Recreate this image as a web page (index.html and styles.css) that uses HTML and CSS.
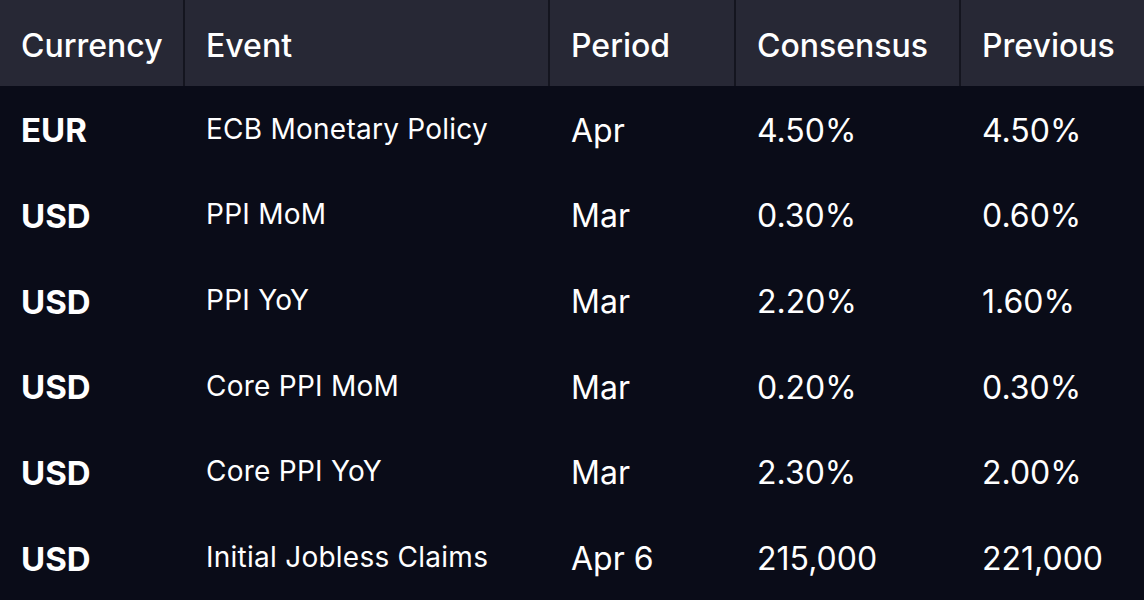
FILE: index.html
```html
<!DOCTYPE html>
<html>
<head>
<meta charset="utf-8">
<link rel="stylesheet" href="styles.css">
</head>
<body>
<div class="table">
  <div class="row head">
    <div class="cell">Currency</div>
    <div class="cell">Event</div>
    <div class="cell">Period</div>
    <div class="cell">Consensus</div>
    <div class="cell">Previous</div>
  </div>
  <div class="row">
    <div class="cell cur">EUR</div>
    <div class="cell ev">ECB Monetary Policy</div>
    <div class="cell">Apr</div>
    <div class="cell">4.50%</div>
    <div class="cell">4.50%</div>
  </div>
  <div class="row">
    <div class="cell cur">USD</div>
    <div class="cell ev">PPI MoM</div>
    <div class="cell">Mar</div>
    <div class="cell">0.30%</div>
    <div class="cell">0.60%</div>
  </div>
  <div class="row">
    <div class="cell cur">USD</div>
    <div class="cell ev">PPI YoY</div>
    <div class="cell">Mar</div>
    <div class="cell">2.20%</div>
    <div class="cell">1.60%</div>
  </div>
  <div class="row">
    <div class="cell cur">USD</div>
    <div class="cell ev">Core PPI MoM</div>
    <div class="cell">Mar</div>
    <div class="cell">0.20%</div>
    <div class="cell">0.30%</div>
  </div>
  <div class="row">
    <div class="cell cur">USD</div>
    <div class="cell ev">Core PPI YoY</div>
    <div class="cell">Mar</div>
    <div class="cell">2.30%</div>
    <div class="cell">2.00%</div>
  </div>
  <div class="row">
    <div class="cell cur">USD</div>
    <div class="cell ev">Initial Jobless Claims</div>
    <div class="cell">Apr 6</div>
    <div class="cell">215,000</div>
    <div class="cell">221,000</div>
  </div>
</div>
</body>
</html>
```
FILE: styles.css
```css
html, body {
  margin: 0;
  padding: 0;
  background: #0a0c18;
}
body {
  font-family: Inter, "Noto Sans", sans-serif;
  color: #ffffff;
  width: 1144px;
  height: 600px;
  overflow: hidden;
}
.table {
  display: grid;
  grid-template-rows: 86px repeat(6, 85.667px);
}
.row {
  display: grid;
  grid-template-columns: 185px 365px 186px 225px 1fr;
  align-items: center;
}
.cell {
  padding-left: 21px;
  padding-top: 4px;
  font-size: 32px;
  font-weight: 400;
  line-height: 1;
}
.head {
  background: #272835;
  align-items: stretch;
}
.head .cell {
  display: flex;
  align-items: center;
  padding-top: 5px;
  font-size: 32px;
  font-weight: 500;
  border-right: 2px solid #14151f;
}
.head .cell:last-child {
  border-right: none;
}
.cur {
  font-size: 33px;
  font-weight: 700;
}
.ev {
  font-size: 28px;
  letter-spacing: 0.25px;
  padding-top: 0;
}
```
